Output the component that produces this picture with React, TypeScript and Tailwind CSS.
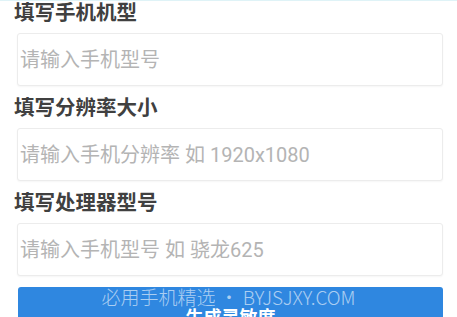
const fields = [
  { label: "填写手机机型", placeholder: "请输入手机型号" },
  { label: "填写分辨率大小", placeholder: "请输入手机分辨率 如 1920x1080" },
  { label: "填写处理器型号", placeholder: "请输入手机型号 如 骁龙625" },
];

export default function App() {
  return (
    <div
      className="relative h-[317px] w-[457px] overflow-hidden bg-white"
      style={{ fontFamily: 'Roboto, "Noto Sans CJK SC", sans-serif' }}
    >
      <div className="h-[1px] bg-[#dff3f7]" />

      <div className="flex flex-col pl-[14px] pr-[14px]">
        {fields.map((f) => (
          <div key={f.label} className="flex flex-col">
            <div className="h-[26px] text-[20.5px] font-bold leading-[25px] text-[#404040]">
              {f.label}
            </div>
            <div className="mt-[6px] ml-[3px] mr-0 mb-[10px] flex h-[53px] items-center rounded-[3px] border border-[#ececec] bg-white pl-[2px] shadow-[0_1px_2px_rgba(0,0,0,0.04)]">
              <input
                className="w-full bg-transparent text-[20px] text-[#444] outline-none placeholder:text-[#b4b4b4]"
                placeholder={f.placeholder}
              />
            </div>
          </div>
        ))}

        {/* 按钮 */}
        <button className="mt-[1px] ml-[4px] flex h-[60px] items-center justify-center rounded-[3px] bg-[#2f87e0] text-[18px] font-bold text-white">
          生成灵敏度
        </button>
      </div>

      {/* 水印 */}
      <div
        className="pointer-events-none absolute left-0 right-0 top-[283px] text-center text-[19px] font-light text-white/60"
        style={{ fontFamily: '"Noto Sans CJK SC", "Noto Sans", sans-serif' }}
      >
        必用手机精选 • BYJSJXY.COM
      </div>
    </div>
  );
}
